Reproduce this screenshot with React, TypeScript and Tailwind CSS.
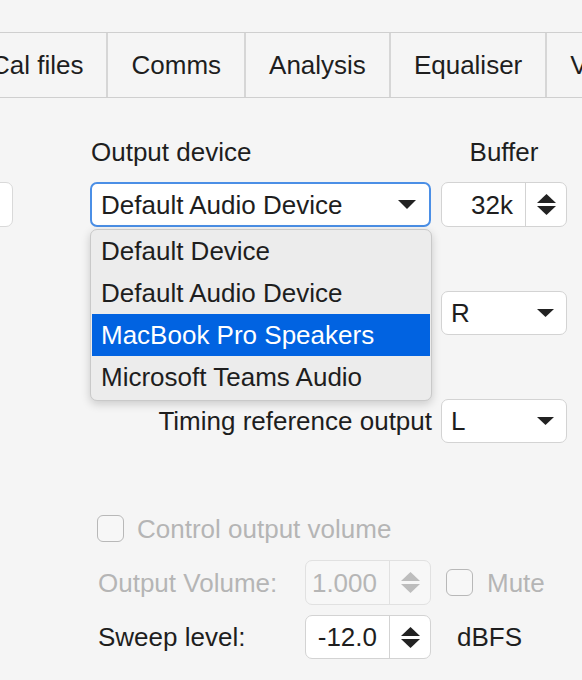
import React from "react";

function Tri({ up, color, w = 19, h = 9 }: { up?: boolean; color: string; w?: number; h?: number }) {
  return (
    <svg width={w} height={h} viewBox={`0 0 ${w} ${h}`} className="block">
      <path d={up ? `M${w / 2} 0 L${w} ${h} L0 ${h}Z` : `M0 0 L${w} 0 L${w / 2} ${h}Z`} fill={color} />
    </svg>
  );
}

function Spinner({ value, disabled }: { value: string; disabled?: boolean }) {
  return (
    <div
      className={
        disabled
          ? "flex h-full w-[126px] rounded-[7px] border border-[#e1e1e1] bg-[#f7f7f7] text-[#b6b6b6]"
          : "flex h-full w-[126px] rounded-[7px] border border-[#d3d3d3] bg-white text-[#1e1e1e]"
      }
    >
      <div className="flex flex-1 items-center justify-end pr-[12px]">{value}</div>
      <div
        className={
          disabled
            ? "flex w-[41px] flex-col items-center justify-center gap-[3px] border-l border-[#e1e1e1]"
            : "flex w-[41px] flex-col items-center justify-center gap-[3px] border-l border-[#d3d3d3]"
        }
      >
        <Tri up color={disabled ? "#bdbdbd" : "#222222"} />
        <Tri color={disabled ? "#bdbdbd" : "#222222"} />
      </div>
    </div>
  );
}

function Select({ value }: { value: string }) {
  return (
    <div className="flex h-full w-[126px] items-center justify-between rounded-[7px] border border-[#d3d3d3] bg-white pl-[9px] pr-[12px] text-[#1e1e1e]">
      <span>{value}</span>
      <Tri color="#222222" w={17} h={8} />
    </div>
  );
}

function Check({ disabled }: { disabled?: boolean }) {
  return (
    <div
      className={
        disabled
          ? "h-[27px] w-[27px] shrink-0 rounded-[6px] border-[1.5px] border-[#b8b8b8] bg-[#f7f7f7]"
          : "h-[27px] w-[27px] shrink-0 rounded-[6px] border-[1.5px] border-[#9a9a9a] bg-white"
      }
    />
  );
}

export default function App() {
  const tabs = ["Cal files", "Comms", "Analysis", "Equaliser", "Viewer"];
  const items = ["Default Device", "Default Audio Device", "MacBook Pro Speakers", "Microsoft Teams Audio"];
  return (
    <div className="h-[680px] w-[582px] overflow-hidden bg-[#f5f5f5] font-['Liberation_Sans',Arial,sans-serif] text-[26px] leading-none text-[#1e1e1e]">
      {/* tab bar */}
      <div className="mt-[32px] flex h-[66px] border-y border-[#cfcfcf]">
        <div className="-ml-[32px] flex">
          {tabs.map((t) => (
            <div key={t} className="flex items-center whitespace-nowrap border-r-2 border-[#d6d6d6] px-[23px]">
              {t}
            </div>
          ))}
        </div>
      </div>

      {/* content */}
      <div className="relative flex flex-col">
        {/* labels */}
        <div className="mt-[39px] flex h-[30px] items-center">
          <div className="ml-[91px] w-[350px]">Output device</div>
          <div className="w-[126px] text-center">Buffer</div>
        </div>

        {/* row B */}
        <div className="mt-[15px] flex h-[45px]">
          <div className="-ml-[47px] h-full w-[60px] rounded-[7px] border border-[#d9d9d9] bg-white" />
          <div className="ml-[77px] flex h-full w-[341px] items-center justify-between rounded-[7px] border-2 border-[#4b8fe6] bg-white pl-[9px] pr-[13px]">
            <span>Default Audio Device</span>
            <Tri color="#222222" w={18} h={9} />
          </div>
          <div className="ml-[10px] h-full">
            <Spinner value="32k" />
          </div>
        </div>

        {/* row C */}
        <div className="mt-[64px] flex h-[44px] pl-[441px]">
          <Select value="R" />
        </div>

        {/* row D */}
        <div className="mt-[64px] flex h-[44px]">
          <div className="flex w-[432px] items-center justify-end">Timing reference output</div>
          <div className="ml-[9px] h-full">
            <Select value="L" />
          </div>
        </div>

        {/* row E */}
        <div className="mt-[72px] flex h-[27px] items-center pl-[97px] text-[#b5b5b5]">
          <Check disabled />
          <span className="ml-[13px]">Control output volume</span>
        </div>

        {/* row F */}
        <div className="mt-[18px] flex h-[45px] items-center pl-[98px]">
          <div className="w-[207px] text-[#b5b5b5]">Output Volume:</div>
          <div className="h-full">
            <Spinner value="1.000" disabled />
          </div>
          <div className="ml-[15px] flex items-center">
            <Check disabled />
            <span className="ml-[14px] text-[#b5b5b5]">Mute</span>
          </div>
        </div>

        {/* row G */}
        <div className="mt-[10px] flex h-[44px] items-center pl-[98px]">
          <div className="w-[207px]">Sweep level:</div>
          <div className="h-full">
            <Spinner value="-12.0" />
          </div>
          <div className="ml-[26px]">dBFS</div>
        </div>

        {/* dropdown menu */}
        <div className="absolute left-[90px] top-[131px] w-[342px] rounded-[7px] border border-[#c9c9c9] bg-[#ececec] px-px pb-[2px] shadow-[0_3px_10px_rgba(0,0,0,0.18)]">
          {items.map((it, i) => (
            <div
              key={it}
              className={
                i === 2
                  ? "flex h-[42px] items-center bg-[#0163e1] pl-[9px] text-white"
                  : "flex h-[42px] items-center pl-[9px] text-[#1e1e1e]"
              }
            >
              {it}
            </div>
          ))}
        </div>
      </div>
    </div>
  );
}
